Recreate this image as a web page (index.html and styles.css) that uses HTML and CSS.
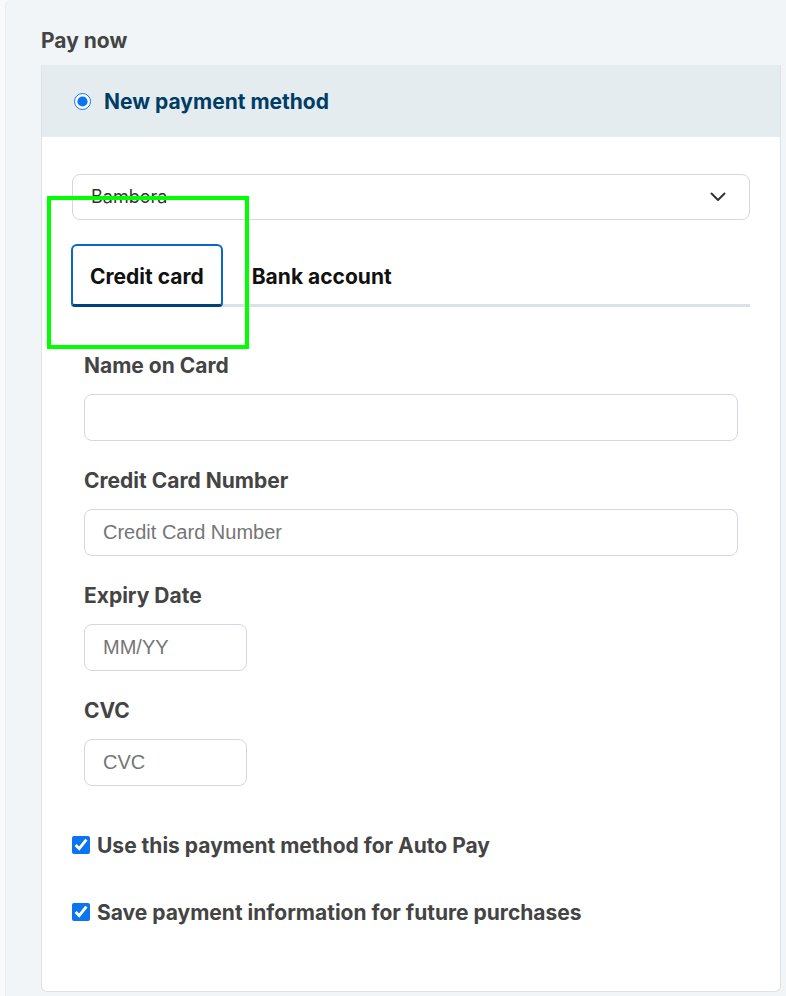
FILE: index.html
```html
<!DOCTYPE html>
<html lang="en">
<head>
<meta charset="utf-8">
<title>Pay now</title>
<link rel="stylesheet" href="styles.css">
</head>
<body>
<div class="page">
  <h2 class="title">Pay now</h2>
  <div class="card">
    <div class="card-head">
      <input class="radio" type="radio" name="method" checked>
      <span class="head-text">New payment method</span>
    </div>
    <div class="card-body">
      <div class="select">
        <span class="select-text">Bambora</span>
        <svg class="chev" width="16" height="10" viewBox="0 0 16 10"><path d="M1.5 1.5 L8 8 L14.5 1.5" fill="none" stroke="#333" stroke-width="2" stroke-linecap="round" stroke-linejoin="round"/></svg>
      </div>
      <div class="tabs">
        <div class="tab active">Credit card</div>
        <div class="tab">Bank account</div>
      </div>
      <div class="form">
        <label class="label">Name on Card</label>
        <div class="input wide"></div>
        <label class="label">Credit Card Number</label>
        <div class="input wide"><span class="ph">Credit Card Number</span></div>
        <label class="label">Expiry Date</label>
        <div class="input short"><span class="ph">MM/YY</span></div>
        <label class="label">CVC</label>
        <div class="input short"><span class="ph">CVC</span></div>
      </div>
      <label class="check"><input type="checkbox" checked><span>Use this payment method for Auto Pay</span></label>
      <label class="check"><input type="checkbox" checked><span>Save payment information for future purchases</span></label>
      <div class="highlight"></div>
    </div>
  </div>
</div>
</body>
</html>
```
FILE: styles.css
```css
* { box-sizing: border-box; }
html, body { margin: 0; padding: 0; }
body {
  background: #f9fafb;
  font-family: Inter, "Noto Sans", sans-serif;
  color: #444;
}
.page {
  margin-left: 5px;
  min-height: 996px;
  background: #f1f5f8;
  border-left: 1px solid #e7ebee;
  border-radius: 6px 0 0 0;
  padding: 29px 5px 6px 35px;
}
.title {
  margin: 0 0 12px;
  font-size: 21px;
  line-height: 24px;
  font-weight: 700;
  color: #444;
}
.card {
  width: 740px;
  background: #fff;
  border: 1px solid #dfe3e7;
  border-top: none;
  border-radius: 0 0 6px 6px;
}
.card-head {
  height: 72px;
  background: #e5ecef;
  display: flex;
  align-items: center;
  padding-left: 32px;
  gap: 13px;
}
.radio {
  width: 17px;
  height: 17px;
  margin: 0;
  accent-color: #0b74f0;
}
.head-text {
  font-size: 21px;
  font-weight: 700;
  color: #003d66;
}
.card-body {
  position: relative;
  padding: 37px 30px 65px 30px;
}
.select {
  height: 46px;
  border: 1px solid #d3d8de;
  border-radius: 8px;
  display: flex;
  align-items: center;
  justify-content: space-between;
  padding: 0 23px 0 18px;
}
.select-text {
  font-size: 18px;
  color: #333;
  margin-top: -2px;
}
.tabs {
  margin-top: 24px;
  display: flex;
  gap: 10px;
  border-bottom: 3px solid #dae2e9;
  margin-left: -1px;
}
.tab {
  height: 63px;
  padding: 2px 17px 0;
  display: flex;
  align-items: center;
  font-size: 21px;
  font-weight: 700;
  color: #111;
  border: 2px solid transparent;
  border-bottom-width: 3px;
  margin-bottom: -3px;
  border-radius: 6px 6px 0 0;
}
.tab.active {
  border-color: #0b66cc;
  border-bottom-color: #00437a;
  border-radius: 6px 6px 4px 4px;
}
.form {
  padding: 46px 12px 0 12px;
  display: flex;
  flex-direction: column;
  align-items: flex-start;
}
.label {
  font-size: 21px;
  line-height: 26px;
  font-weight: 700;
  color: #444;
  margin-bottom: 15px;
}
.input {
  height: 47px;
  border: 1px solid #d3d8de;
  border-radius: 8px;
  display: flex;
  align-items: center;
  padding-left: 18px;
  margin-bottom: 27px;
}
.input.wide { width: 654px; }
.input.short { width: 163px; }
.ph {
  font-family: "Liberation Sans", Arial, sans-serif;
  font-size: 20px;
  color: #757575;
}
.form .input:last-child { margin-bottom: 0; }
.check {
  display: flex;
  align-items: center;
  gap: 7px;
  font-size: 21px;
  font-weight: 700;
  color: #444;
  line-height: 26px;
  margin-top: 47px;
}
.check + .check { margin-top: 41px; }
.check input {
  width: 18px;
  height: 18px;
  margin: 0 0 3px;
  accent-color: #0b74f0;
}
.highlight {
  position: absolute;
  left: 5px;
  top: 59px;
  width: 202px;
  height: 153px;
  border: 4px solid #00ff00;
  pointer-events: none;
}
```
